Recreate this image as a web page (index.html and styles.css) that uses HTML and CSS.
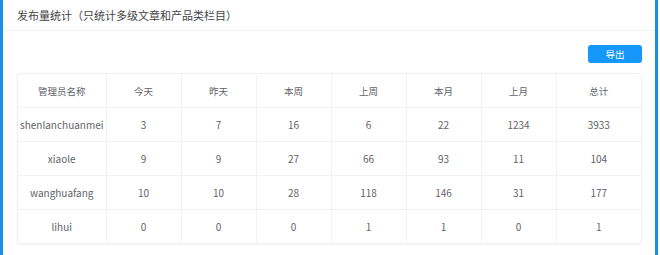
FILE: index.html
```html
<!DOCTYPE html>
<html lang="zh-CN">
<head>
<meta charset="utf-8">
<link rel="stylesheet" href="styles.css">
</head>
<body>
<div class="frame">
  <div class="bar"></div>
  <div class="panel">
    <div class="title">发布量统计（只统计多级文章和产品类栏目）</div>
    <div class="content">
      <div class="toolbar"><button class="btn">导出</button></div>
      <div class="table-wrap">
        <table class="stats">
          <colgroup>
            <col class="c-name"><col class="c-mid"><col class="c-mid"><col class="c-mid"><col class="c-mid"><col class="c-mid"><col class="c-mid"><col class="c-total">
          </colgroup>
          <thead>
            <tr><th>管理员名称</th><th>今天</th><th>昨天</th><th>本周</th><th>上周</th><th>本月</th><th>上月</th><th>总计</th></tr>
          </thead>
          <tbody>
            <tr><td>shenlanchuanmei</td><td>3</td><td>7</td><td>16</td><td>6</td><td>22</td><td>1234</td><td>3933</td></tr>
            <tr><td>xiaole</td><td>9</td><td>9</td><td>27</td><td>66</td><td>93</td><td>11</td><td>104</td></tr>
            <tr><td>wanghuafang</td><td>10</td><td>10</td><td>28</td><td>118</td><td>146</td><td>31</td><td>177</td></tr>
            <tr><td>lihui</td><td>0</td><td>0</td><td>0</td><td>1</td><td>1</td><td>0</td><td>1</td></tr>
          </tbody>
        </table>
      </div>
    </div>
  </div>
  <div class="bar"></div>
  <div class="edge"></div>
</div>
</body>
</html>
```
FILE: styles.css
```css
html, body {
  margin: 0;
  padding: 0;
  background: #ffffff;
}
body {
  font-family: "Noto Sans CJK SC", "Noto Sans", sans-serif;
  width: 660px;
  height: 255px;
  overflow: hidden;
}
.frame {
  display: flex;
  height: 255px;
}
.bar {
  width: 3px;
  background: #1e8ee2;
  flex: none;
}
.edge {
  width: 2px;
  background: #f7f8fa;
  flex: none;
}
.panel {
  flex: 1;
  background: #fff;
  display: flex;
  flex-direction: column;
}
.title {
  height: 30px;
  line-height: 30px;
  border-bottom: 1px solid #f0f2f5;
  padding-left: 14px;
  font-size: 11px;
  color: #444;
}
.content {
  padding: 14px 13px 0 14px;
}
.toolbar {
  display: flex;
  justify-content: flex-end;
  margin-bottom: 10px;
}
.btn {
  width: 54px;
  height: 18px;
  padding: 0;
  border: none;
  border-radius: 3px;
  background: #1697fb;
  color: #fff;
  font-family: inherit;
  font-size: 9.5px;
  line-height: 18px;
}
.table-wrap {
  border: 1px solid #eef0f3;
  border-radius: 4px;
  box-shadow: 0 1px 3px rgba(0, 0, 0, 0.05);
  overflow: hidden;
}
.stats {
  width: 100%;
  border-collapse: collapse;
  table-layout: fixed;
  font-size: 9.5px;
  color: #5f6368;
}
.c-name { width: 88px; }
.c-mid { width: 75px; }
.c-total { width: auto; }
.stats th, .stats td {
  height: 33px;
  padding: 0;
  text-align: center;
  font-weight: normal;
  border-right: 1px solid #f0f2f5;
  border-bottom: 1px solid #f0f2f5;
}
.stats th:last-child, .stats td:last-child { border-right: none; }
.stats tbody tr:last-child td { border-bottom: none; }
.stats td { font-size: 10px; }
```
